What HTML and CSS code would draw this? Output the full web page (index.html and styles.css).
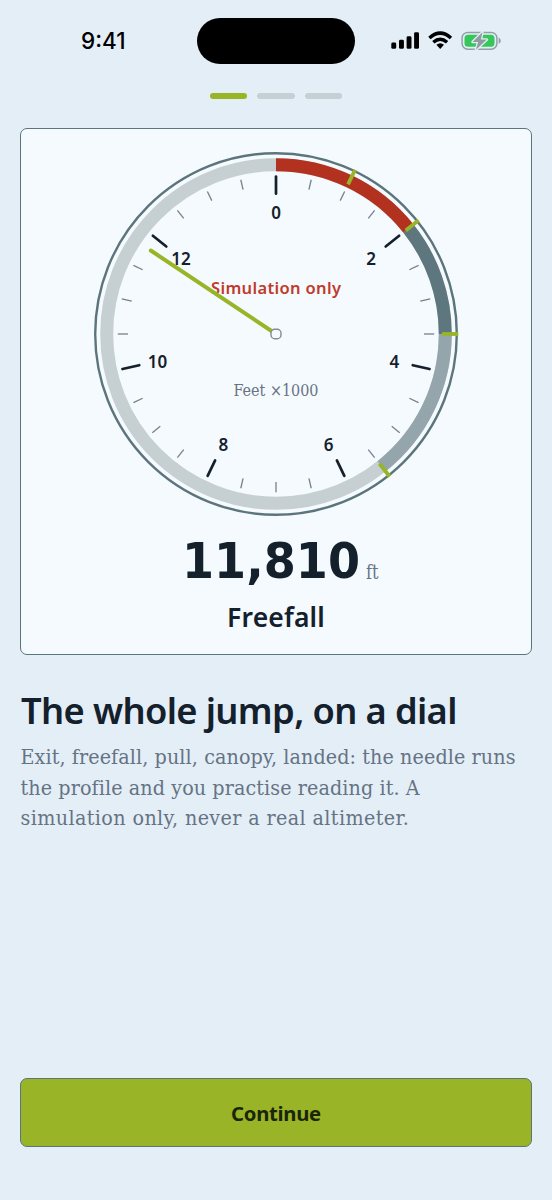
FILE: index.html
```html
<!DOCTYPE html>
<html lang="en">
<head>
<meta charset="utf-8">
<meta name="viewport" content="width=device-width">
<title>The whole jump, on a dial</title>
<link rel="stylesheet" href="styles.css">
</head>
<body>
<div class="screen">
  <header class="status">
    <span class="time">9:41</span>
    <span class="island"></span>
    <svg class="indicators" width="112" height="22" viewBox="0 0 112 22" aria-hidden="true">
      <g><rect x="0.3" y="12.6" width="4.9" height="6.2" rx="1.4"/><rect x="8" y="9.8" width="4.9" height="9" rx="1.4"/><rect x="15.6" y="6.3" width="4.9" height="12.5" rx="1.4"/><rect x="23.1" y="2.2" width="4.9" height="16.6" rx="1.4"/></g>
      <g class="wifi"><path d="M38.4 8.1Q49.2-1.8 60 8.1"/><path d="M42.3 12.2Q49.2 6.2 56.1 12.2"/><path class="dot" d="M45.4 14.8Q49.2 11.6 53 14.8L49.2 18.9Z"/></g>
      <rect class="cell" x="71.1" y="2.4" width="34.8" height="16.8" rx="5.6"/>
      <rect class="charge" x="73.5" y="4.8" width="30" height="12" rx="3.6"/>
      <path class="nub" d="M107.6 7.6Q109.8 8.3 109.8 10.7T107.6 13.8Z"/>
      <path class="bolt" d="M91.4 2.2L81.6 12H87.2L84.9 19.8L95.9 9.6H89.9Z"/>
    </svg>
  </header>
  <div class="steps"><i class="on"></i><i></i><i></i></div>
  <section class="card">
    <svg class="dial" width="370" height="370" viewBox="-185 -185 370 370">
      <circle class="rim" r="180.8"/>
      <circle class="band" r="169.3"/>
      <g class="arcs">
        <path class="mid" d="M169.3 0A169.3 169.3 0 0 1 105.6 132.3"/>
        <path class="dark" d="M132.3 -105.6A169.3 169.3 0 0 1 169.3 0"/>
        <path class="red" d="M0 -169.3A169.3 169.3 0 0 1 132.3 -105.6"/>
      </g>
      <g id="ticks"></g>
      <g class="marks">
        <path transform="rotate(25.714)" d="M0-182.3V-166"/><path transform="rotate(51.429)" d="M0-182.3V-166"/><path transform="rotate(90)" d="M0-182.3V-166"/><path transform="rotate(141.429)" d="M0-182.3V-166"/>
      </g>
      <g class="nums" id="nums"></g>
      <text class="sim" x="0" y="-40.2" textLength="130">Simulation only</text>
      <text class="feet" x="0" y="62" textLength="85" lengthAdjust="spacingAndGlyphs">Feet ×1000</text>
      <path class="needle" transform="rotate(303.686)" d="M0 0V-150.5"/>
      <rect class="hub" x="-5" y="-4.7" width="10" height="9.4" rx="3.8"/>
    </svg>
    <svg class="reading" width="220" height="68" viewBox="166 522 220 68">
      <text class="alt" x="182" y="578" textLength="178" lengthAdjust="spacingAndGlyphs">11,810</text>
      <text class="unit" x="366" y="578.5" textLength="12.5" lengthAdjust="spacingAndGlyphs">ft</text>
    </svg>
    <div class="phase">Freefall</div>
  </section>
  <h1 class="title">The whole jump, on a dial</h1>
  <p class="copy"><span class="l1">Exit, freefall, pull, canopy, landed: the needle runs</span><br><span class="l2">the profile and you practise reading it. A</span><br><span class="l3">simulation only, never a real altimeter.</span></p>
  <button class="go">Continue</button>
</div>
<script src="dial.js"></script>
</body>
</html>
```
FILE: styles.css
```css
* { box-sizing: border-box; }
body { margin: 0; background: #e3eef7; }
.screen { width: 552px; height: 1200px; padding: 0 20px; display: flex; flex-direction: column; font-family: "Noto Sans", sans-serif; color: #14202c; }
.status { height: 64px; flex: none; padding-top: 18px; display: grid; grid-template-columns: 177px 158px 1fr; align-items: start; }
.time { font: 500 22.5px/46px Inter, sans-serif; color: #000; padding-left: 61px; letter-spacing: 0; }
.island { height: 46px; border-radius: 23px; background: #000; }
.indicators { margin: 12px 0 0 36px; }
.wifi path { fill: none; stroke: #000; stroke-width: 3.4; }
.wifi .dot { fill: #000; stroke: none; }
.cell { fill: none; stroke: #94a0a6; stroke-width: 1.5; }
.charge { fill: #34c759; }
.nub { fill: #94a0a6; }
.bolt { fill: #8f9b9f; stroke: #e3eef7; stroke-width: 2.6; paint-order: stroke; stroke-linejoin: round; }
.steps { display: flex; justify-content: center; gap: 10px; padding-top: 29px; height: 64px; flex: none; }
.steps i { width: 37.3px; height: 5.5px; border-radius: 3px; background: #c5d0d5; }
.steps .on { background: #97b526; }
.card { height: 527px; flex: none; margin: 0.4px 0 0; border: 1.4px solid #5c757c; border-radius: 7px; background: #f5fafe; display: flex; flex-direction: column; align-items: center; padding-top: 19.4px; }
.dial { flex: none; overflow: visible; }
.rim { fill: none; stroke: #5c757c; stroke-width: 2.4; }
.band { fill: none; stroke: #c6d0d2; stroke-width: 13; }
.arcs path { fill: none; stroke-width: 13; }
.arcs .red { stroke: #b3311f; }
.arcs .dark { stroke: #5e777e; }
.arcs .mid { stroke: #94a5ab; }
.marks path { stroke: #97b526; stroke-width: 3.8; }
.major { stroke: #14202c; stroke-width: 2.7; stroke-linecap: round; }
.minor { stroke: #74818b; stroke-width: 1.3; }
.nums text { font: 600 17px "Noto Sans", sans-serif; text-anchor: middle; fill: #14202c; }
.sim { font: 600 16.5px "Noto Sans", sans-serif; text-anchor: middle; fill: #c03a2b; }
.feet { font: 17.5px "DejaVu Serif Condensed", "DejaVu Serif", serif; text-anchor: middle; fill: #667383; }
.needle { stroke: #97b526; stroke-width: 4; stroke-linecap: round; }
.hub { fill: #f5fafe; stroke: #7f8e90; stroke-width: 1.4; }
.reading { flex: none; margin-top: 3px; }
.alt { font: 700 50.5px "DejaVu Sans", sans-serif; fill: #14202c; }
.unit { font: 20px "DejaVu Serif Condensed", "DejaVu Serif", serif; fill: #667383; }
.phase { font-size: 26.5px; font-weight: 600; line-height: 36px; margin-top: 9px; letter-spacing: 0.15px; }
.title { margin: 32px 0 0 1px; font-size: 36.3px; line-height: 46px; font-weight: 600; letter-spacing: -0.64px; white-space: nowrap; }
.copy { margin: 9px 0 0 0.5px; font: 21.3px/30.5px "DejaVu Serif Condensed", "DejaVu Serif", serif; color: #667383; white-space: nowrap; }
.l1 { letter-spacing: 0.09px; }
.l2 { letter-spacing: 0.09px; }
.l3 { letter-spacing: 0.38px; }
.go { margin-top: auto; margin-bottom: 53px; height: 69px; flex: none; border: 1.4px solid #5c757c; border-radius: 7px; background: #99b427; font: 700 20.3px "Noto Sans", sans-serif; letter-spacing: -0.3px; color: #1b2608; }
```
FILE: dial.js
```js
const NS = 'http://www.w3.org/2000/svg';
const ticks = document.getElementById('ticks');
const nums = document.getElementById('nums');
for (let i = 0; i < 28; i++) {
  const deg = i * 360 / 28;
  const major = i % 4 === 0;
  const p = document.createElementNS(NS, 'path');
  p.setAttribute('class', major ? 'major' : 'minor');
  p.setAttribute('d', major ? 'M0-157.5V-140.3' : 'M0-158.2V-148');
  p.setAttribute('transform', `rotate(${deg})`);
  ticks.append(p);
  if (major) {
    const t = document.createElementNS(NS, 'text');
    const a = deg * Math.PI / 180;
    t.setAttribute('x', 121.5 * Math.sin(a));
    t.setAttribute('y', 6.6 - 122 * Math.cos(a));
    t.textContent = i / 2;
    nums.append(t);
  }
}
```
